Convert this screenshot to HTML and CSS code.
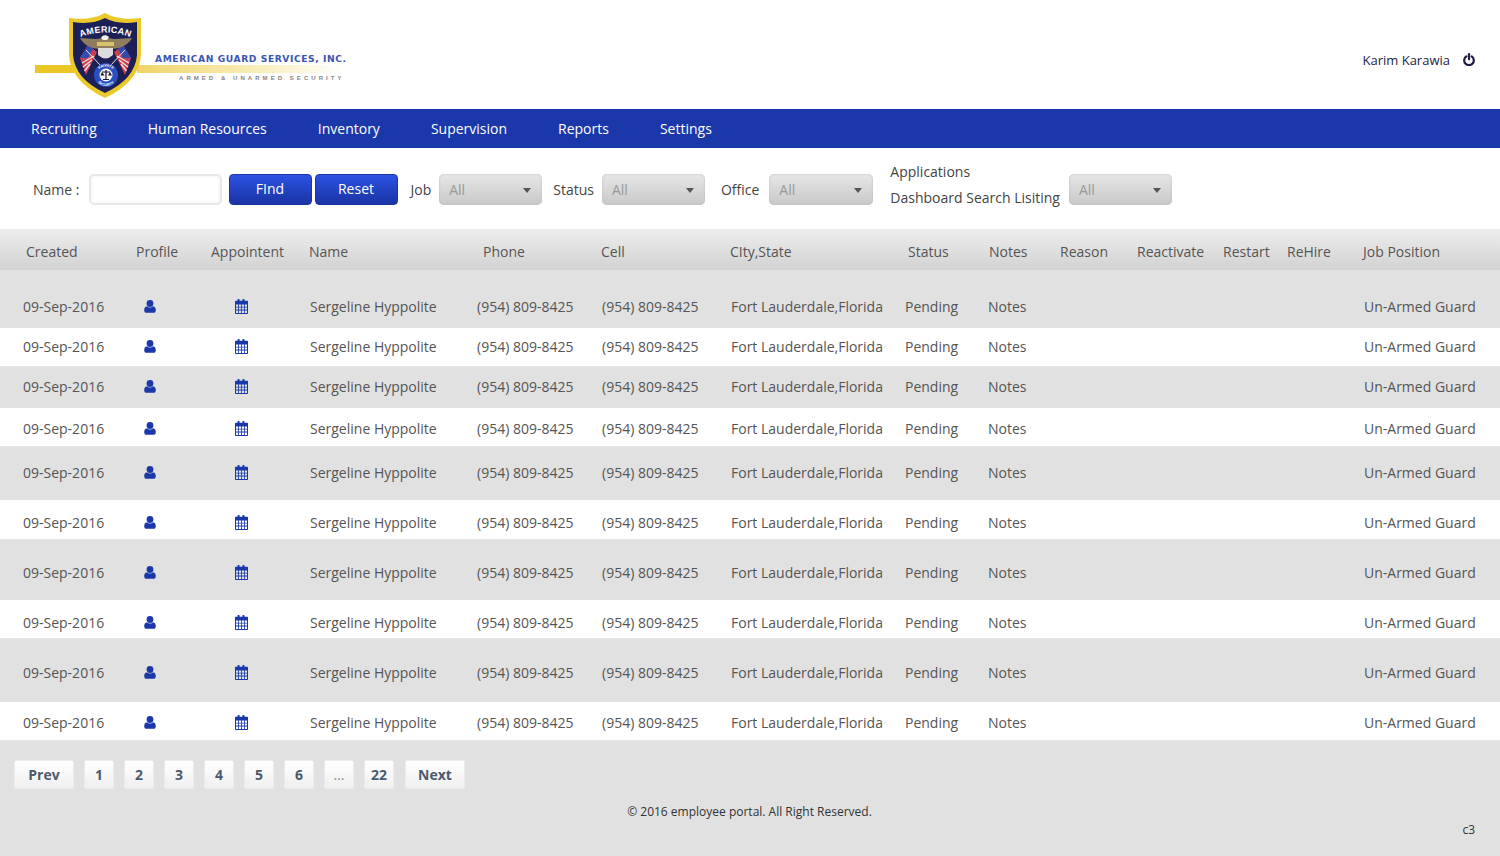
FILE: index.html
```html
<!DOCTYPE html>
<html lang="en">
    <head>
        <meta charset="UTF-8">
        <meta name="viewport" content="width=device-width, initial-scale=1.0">
        <title>Employee Portal</title>
        <link rel="stylesheet" href="styles.css">
    </head>

    <body>

        <!-- Icons -->

        <svg class="sprites" width="0" height="0">
            <symbol id="icon-user" viewBox="0 0 12 13">
                <circle cx="6" cy="3.500" r="3.400"/>
                <path d="M3 6.200C3.800 7 4.800 7.400 6 7.400s2.200-.4 3-1.200c1.900.2 2.800 1.700 2.800 4 0 1.700-1 2.600-2.300 2.600H2.500C1.200 12.800.2 11.900.2 10.200c0-2.300.9-3.800 2.800-4z"/>
            </symbol>
            <symbol id="icon-calendar" viewBox="0 0 13 15">
                <path fill-rule="evenodd" d="M1 1.800h1.500V.8c0-.4.300-.7.700-.7h.7c.4 0 .7.300.7.700v1h2.800v-1c0-.4.300-.7.700-.7h.7c.4 0 .7.300.7.700v1H12c.6 0 1 .4 1 1V14c0 .6-.4 1-1 1H1c-.6 0-1-.4-1-1V2.800c0-.6.4-1 1-1zM1 5.600v2.100h2.200V5.600zm3 0v2.100h2.100V5.600zm2.900 0v2.100H9V5.600zm2.900 0v2.100H12V5.600zM1 8.500v2.100h2.200V8.500zm3 0v2.100h2.100V8.500zm2.900 0v2.100H9V8.500zm2.900 0v2.100H12V8.500zM1 11.400V14h2.200v-2.600zm3 0V14h2.100v-2.600zm2.900 0V14H9v-2.600zm2.900 0V14H12v-2.600z"/>
            </symbol>
        </svg>

        <!-- Header -->

        <header class="top">
            <svg class="logo" width="360" height="109" viewBox="0 0 360 109" role="img" aria-label="American Guard Services, Inc.">
                <defs>
                    <linearGradient id="barFade" x1="0" x2="1" y1="0" y2="0">
                        <stop offset="0" stop-color="#f0d468"/>
                        <stop offset="0.5" stop-color="#f8eaaf"/>
                        <stop offset="1" stop-color="#ffffff"/>
                    </linearGradient>
                    <path id="arcTop" d="M81 37 Q105 28 130 37"/>
                    <path id="arcBadgeTop" d="M97 73 A9.500 9.500 0 0 1 115 73"/>
                    <path id="arcBadgeBottom" d="M95 75 A11 11 0 0 0 117 75"/>
                </defs>

                <rect x="35" y="65" width="40" height="8" fill="#ebc725"/>
                <rect x="137" y="65" width="208" height="8" fill="url(#barFade)"/>

                <path d="M105 13 Q119 21 141 18 L141 55 Q139 82 105 98 Q71 82 69 55 L69 18 Q91 21 105 13 Z" fill="#ecc92a"/>
                <path d="M105 18 Q118 25 137 22 L137 55 Q135 79 105 93 Q75 79 73 55 L73 22 Q92 25 105 18 Z" fill="#1d1f57"/>

                <text class="logo-arc" font-size="9"><textPath href="#arcTop" startOffset="50%" text-anchor="middle">AMERICAN</textPath></text>

                <!-- flags -->
                <path d="M88 45 L97 52 L86 75 L80 58 Z" fill="#c9404f"/>
                <path d="M82 63 L94 56 M83 67 L92 60 M84.500 71 L90 64" stroke="#f5e3e3" stroke-width="1.400"/>
                <path d="M88 45 L93 49 L88 58 L80 58 Z" fill="#2f4cb4"/>
                <path d="M123 45 L114 52 L125 75 L131 58 Z" fill="#c9404f"/>
                <path d="M129 63 L117 56 M128 67 L119 60 M126.500 71 L121 64" stroke="#f5e3e3" stroke-width="1.400"/>
                <path d="M123 45 L118 49 L123 58 L131 58 Z" fill="#2f4cb4"/>

                <!-- eagle -->
                <path d="M80 38 C88 38 96 40 102 38 L109 38 C115 40 123 38 132 38 C128 46 118 49 110 49 L101 49 C93 49 84 46 80 38 Z" fill="#8f7d5e"/>
                <path d="M101 38 C102 35 106 34 109 37 L107 40 L103 40 Z" fill="#f5f3ea"/>
                <rect x="97" y="42" width="17" height="4" fill="#d8c26a"/>
                <path d="M98 48 H113 V55 Q105.500 62 98 55 Z" fill="#dcdcdc"/>
                <path d="M86 50 L101 66 M125 50 L110 66" stroke="#ece9de" stroke-width="1"/>

                <!-- badge -->
                <circle cx="106" cy="75" r="12" fill="#2a4fc0"/>
                <circle cx="106" cy="75" r="6.500" fill="#f4f4f4"/>
                <path d="M106 70 V79 M102 72 H110 M103 79.500 H109" stroke="#1a1a2e" stroke-width="1.200"/>
                <path d="M102 72 L100.500 75.500 H104.500 Z M110 72 L108 75.500 H112 Z" fill="#1a1a2e"/>
                <text class="logo-badge" font-size="3.500"><textPath href="#arcBadgeTop" startOffset="50%" text-anchor="middle">PRIVATE</textPath></text>
                <text class="logo-badge" font-size="3.500"><textPath href="#arcBadgeBottom" startOffset="50%" text-anchor="middle">SECURITY</textPath></text>

                <text class="logo-name" x="155" y="62">AMERICAN GUARD SERVICES, INC.</text>
                <text class="logo-tag" x="179" y="80">ARMED &amp; UNARMED SECURITY</text>
            </svg>

            <div class="user">
                <span>Karim Karawia</span>
                <svg class="power" width="12" height="13" viewBox="0 0 12 13">
                    <path d="M3.300 3.400a4.800 4.800 0 1 0 5.400 0" fill="none" stroke="currentColor" stroke-width="2.200" stroke-linecap="round"/>
                    <path d="M6 1.200v5" fill="none" stroke="currentColor" stroke-width="2.200" stroke-linecap="round"/>
                </svg>
            </div>
        </header>

        <!-- Main menu -->

        <nav class="menu">
            <a href="#">Recruiting</a>
            <a href="#">Human Resources</a>
            <a href="#">Inventory</a>
            <a href="#">Supervision</a>
            <a href="#">Reports</a>
            <a href="#">Settings</a>
        </nav>

        <!-- Search -->

        <form class="search">
            <label class="name-label">Name :</label>
            <input class="name-input" type="text">
            <button class="btn btn-find" type="button">FInd</button>
            <button class="btn btn-reset" type="button">Reset</button>
            <label class="job-label">Job</label>
            <div class="select select-job">All</div>
            <label class="status-label">Status</label>
            <div class="select select-status">All</div>
            <label class="office-label">Office</label>
            <div class="select select-office">All</div>
            <label class="apps-label">Applications<br>Dashboard Search Lisiting</label>
            <div class="select select-apps">All</div>
        </form>

        <!-- List -->

        <div class="list-head">
            <span>Created</span>
            <span>Profile</span>
            <span>Appointent</span>
            <span>Name</span>
            <span>Phone</span>
            <span>Cell</span>
            <span>CIty,State</span>
            <span>Status</span>
            <span>Notes</span>
            <span>Reason</span>
            <span>Reactivate</span>
            <span>Restart</span>
            <span>ReHire</span>
            <span>Job Position</span>
        </div>

        <div class="list">
            <div class="row"><span>09-Sep-2016</span><svg class="icon icon-u"><use href="#icon-user"/></svg><svg class="icon icon-c"><use href="#icon-calendar"/></svg><span>Sergeline Hyppolite</span><span>(954) 809-8425</span><span>(954) 809-8425</span><span>Fort Lauderdale,Florida</span><span>Pending</span><span>Notes</span><span>Un-Armed Guard</span></div>
            <div class="row"><span>09-Sep-2016</span><svg class="icon icon-u"><use href="#icon-user"/></svg><svg class="icon icon-c"><use href="#icon-calendar"/></svg><span>Sergeline Hyppolite</span><span>(954) 809-8425</span><span>(954) 809-8425</span><span>Fort Lauderdale,Florida</span><span>Pending</span><span>Notes</span><span>Un-Armed Guard</span></div>
            <div class="row"><span>09-Sep-2016</span><svg class="icon icon-u"><use href="#icon-user"/></svg><svg class="icon icon-c"><use href="#icon-calendar"/></svg><span>Sergeline Hyppolite</span><span>(954) 809-8425</span><span>(954) 809-8425</span><span>Fort Lauderdale,Florida</span><span>Pending</span><span>Notes</span><span>Un-Armed Guard</span></div>
            <div class="row"><span>09-Sep-2016</span><svg class="icon icon-u"><use href="#icon-user"/></svg><svg class="icon icon-c"><use href="#icon-calendar"/></svg><span>Sergeline Hyppolite</span><span>(954) 809-8425</span><span>(954) 809-8425</span><span>Fort Lauderdale,Florida</span><span>Pending</span><span>Notes</span><span>Un-Armed Guard</span></div>
            <div class="row"><span>09-Sep-2016</span><svg class="icon icon-u"><use href="#icon-user"/></svg><svg class="icon icon-c"><use href="#icon-calendar"/></svg><span>Sergeline Hyppolite</span><span>(954) 809-8425</span><span>(954) 809-8425</span><span>Fort Lauderdale,Florida</span><span>Pending</span><span>Notes</span><span>Un-Armed Guard</span></div>
            <div class="row"><span>09-Sep-2016</span><svg class="icon icon-u"><use href="#icon-user"/></svg><svg class="icon icon-c"><use href="#icon-calendar"/></svg><span>Sergeline Hyppolite</span><span>(954) 809-8425</span><span>(954) 809-8425</span><span>Fort Lauderdale,Florida</span><span>Pending</span><span>Notes</span><span>Un-Armed Guard</span></div>
            <div class="row"><span>09-Sep-2016</span><svg class="icon icon-u"><use href="#icon-user"/></svg><svg class="icon icon-c"><use href="#icon-calendar"/></svg><span>Sergeline Hyppolite</span><span>(954) 809-8425</span><span>(954) 809-8425</span><span>Fort Lauderdale,Florida</span><span>Pending</span><span>Notes</span><span>Un-Armed Guard</span></div>
            <div class="row"><span>09-Sep-2016</span><svg class="icon icon-u"><use href="#icon-user"/></svg><svg class="icon icon-c"><use href="#icon-calendar"/></svg><span>Sergeline Hyppolite</span><span>(954) 809-8425</span><span>(954) 809-8425</span><span>Fort Lauderdale,Florida</span><span>Pending</span><span>Notes</span><span>Un-Armed Guard</span></div>
            <div class="row"><span>09-Sep-2016</span><svg class="icon icon-u"><use href="#icon-user"/></svg><svg class="icon icon-c"><use href="#icon-calendar"/></svg><span>Sergeline Hyppolite</span><span>(954) 809-8425</span><span>(954) 809-8425</span><span>Fort Lauderdale,Florida</span><span>Pending</span><span>Notes</span><span>Un-Armed Guard</span></div>
            <div class="row"><span>09-Sep-2016</span><svg class="icon icon-u"><use href="#icon-user"/></svg><svg class="icon icon-c"><use href="#icon-calendar"/></svg><span>Sergeline Hyppolite</span><span>(954) 809-8425</span><span>(954) 809-8425</span><span>Fort Lauderdale,Florida</span><span>Pending</span><span>Notes</span><span>Un-Armed Guard</span></div>
        </div>

        <!-- Bottom -->

        <footer class="bottom">
            <div class="pager">
                <a class="wide" href="#">Prev</a>
                <a href="#">1</a>
                <a href="#">2</a>
                <a href="#">3</a>
                <a href="#">4</a>
                <a href="#">5</a>
                <a href="#">6</a>
                <a class="dots" href="#">…</a>
                <a href="#">22</a>
                <a class="wide next" href="#">Next</a>
            </div>
            <p class="copy">© 2016 employee portal. All Right Reserved.</p>
            <p class="version">c3</p>
        </footer>

    </body>
</html>
```

FILE: styles.css
```css
* {
    box-sizing: border-box;
}

html,
body {
    margin: 0;
    height: 100%;
}

body {
    font-family: "Open Sans", "Noto Sans", sans-serif;
    font-size: 14px;
    color: #555;
    background: #e1e1e1;
    overflow: hidden;
}

.sprites {
    position: absolute;
}

/* Header */

.top {
    display: flex;
    justify-content: space-between;
    height: 109px;
    background: #fff;
}

.logo {
    display: block;
}

.logo-arc {
    font-family: "Liberation Sans", sans-serif;
    font-weight: bold;
    fill: #fff;
    letter-spacing: 0.3px;
}

.logo-badge {
    font-family: "Liberation Sans", sans-serif;
    font-weight: bold;
    fill: #fff;
}

.logo-name {
    font-family: "DejaVu Sans", sans-serif;
    font-size: 9.200px;
    font-weight: bold;
    fill: #3b55b4;
    letter-spacing: 0.55px;
}

.logo-tag {
    font-family: "Liberation Sans", sans-serif;
    font-size: 6px;
    font-weight: bold;
    fill: #858585;
    letter-spacing: 3.050px;
}

.user {
    display: flex;
    align-items: center;
    gap: 13px;
    height: 119px;
    padding-right: 25px;
    font-size: 13px;
    color: #1f1d45;
}

/* Main menu */

.menu {
    display: flex;
    gap: 51px;
    align-items: center;
    height: 39px;
    padding-left: 31px;
    background: #1a38aa;
}

.menu a {
    color: #fff;
    text-decoration: none;
}

/* Search */

.search {
    display: flex;
    align-items: center;
    height: 81px;
    padding: 2px 0 0 33px;
    background: #fff;
    color: #444;
}

.name-input {
    width: 133px;
    height: 31px;
    margin: 0 7px 0 10px;
    border: 2px solid #e8e8e8;
    border-radius: 5px;
    background: #fff;
    box-shadow: inset 0 0 3px #eee;
}

.btn {
    width: 83px;
    height: 31px;
    margin-right: 3px;
    border: 1px solid #1c35a0;
    border-radius: 4px;
    background: linear-gradient(#2c52e4, #1a34a3);
    color: #fff;
    font: inherit;
    padding: 0 2px 3px 0;
}

.job-label {
    margin-left: 9px;
    margin-right: 8px;
}

.select {
    position: relative;
    width: 103px;
    height: 31px;
    padding: 6px 10px;
    border-radius: 5px;
    background: linear-gradient(#e6e6e6, #c9c9c9);
    box-shadow: inset 0 0 2px #b5b5b5;
    color: #999;
}

.select::after {
    content: "";
    position: absolute;
    top: 14px;
    right: 11px;
    border-top: 5px solid #555;
    border-left: 4px solid transparent;
    border-right: 4px solid transparent;
}

.status-label {
    margin-left: 11px;
    margin-right: 8px;
}

.office-label {
    margin-left: 16px;
    margin-right: 10px;
}

.select-office {
    width: 104px;
}

.apps-label {
    margin: -10px 9px 0 17px;
    line-height: 26px;
}

/* List */

.list-head {
    display: grid;
    grid-template-columns: 110px 75px 98px 174px 118px 129px 178px 81px 71px 77px 86px 64px 76px 1fr;
    align-items: center;
    height: 41px;
    padding: 4px 0 0 26px;
    background: linear-gradient(#ededed, #d2d2d2);
}

.row {
    display: grid;
    grid-template-columns: 121px 91px 75px 167px 125px 129px 174px 83px 376px 1fr;
    align-items: center;
    padding-left: 23px;
    background: #fff;
    border-bottom: 1px solid #e6e6e6;
}

.row:nth-child(odd) {
    background: #e1e1e1;
    border-bottom: 0;
}

.row:nth-child(1) { height: 58px; padding-top: 14px; }
.row:nth-child(2) { height: 39px; padding-bottom: 1px; }
.row:nth-child(3) { height: 41px; padding-bottom: 2px; }
.row:nth-child(4) { height: 39px; padding-top: 3px; }
.row:nth-child(5) { height: 53px; padding-bottom: 2px; }
.row:nth-child(6) { height: 40px; padding-top: 6px; }
.row:nth-child(7) { height: 60px; padding-top: 4px; }
.row:nth-child(8) { height: 39px; padding-top: 7px; }
.row:nth-child(9) { height: 63px; padding-top: 3px; }
.row:nth-child(10) { height: 39px; padding-top: 3px; }

.icon {
    fill: #1a38aa;
}

.icon-u {
    width: 12px;
    height: 13px;
}

.icon-c {
    width: 13px;
    height: 15px;
}

/* Bottom */

.bottom {
    padding: 19px 0 0 14px;
}

.pager {
    display: flex;
    gap: 10px;
}

.pager a {
    width: 30px;
    height: 29px;
    border: 1px solid #ececec;
    border-radius: 2px;
    background: linear-gradient(#fff, #efefef);
    color: #4c5a6b;
    font-weight: bold;
    line-height: 27px;
    text-align: center;
    text-decoration: none;
}

.pager .wide {
    width: 60px;
}

.pager .next {
    margin-left: 1px;
}

.pager .dots {
    color: #888;
    font-weight: normal;
}

.copy {
    margin: 14px 15px 0 0;
    font-size: 12px;
    color: #333;
    text-align: center;
}

.version {
    margin: 0;
    padding: 1px 25px 0 0;
    font-size: 12px;
    color: #333;
    text-align: right;
}
```
